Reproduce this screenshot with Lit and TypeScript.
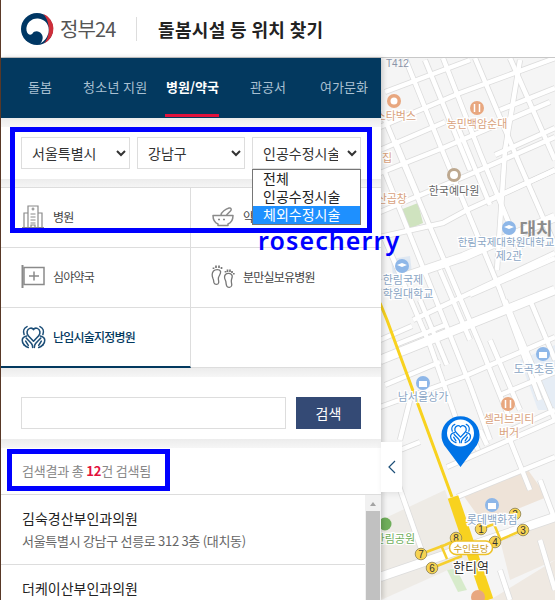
import { LitElement, html, css, svg } from "lit";
import { customElement } from "lit/decorators.js";

const heartHands = (c: string, w = 1.5) => svg`
  <g fill="none" stroke=${c} stroke-width=${w} stroke-linecap="round" stroke-linejoin="round">
    <path d="M12 16.500 7 11.200C5 9 5.500 5.300 8.300 4.200c1.600-.6 3 0 3.700 1.300.7-1.300 2.100-1.900 3.700-1.300 2.800 1.100 3.300 4.800 1.300 7z"/>
    <path d="M5.800 2.500C2.800 3.800 1.800 7 3 10"/><path d="M18.200 2.500C21.200 3.800 22.200 7 21 10"/>
    <path d="M5.500 11.500C3 12 1.300 13.500 1.200 15.500c-.1 2 .8 3.500 1.800 4.500"/><path d="M18.500 11.500C21 12 22.700 13.500 22.800 15.500c.1 2-.8 3.500-1.800 4.500"/>
    <path d="M5 13.500c1.500 1.800 3.500 3.500 5 5.200.8 1 1.200 2.200 1.200 3.800"/><path d="M19 13.500c-1.500 1.800-3.500 3.500-5 5.200-.8 1-1.200 2.200-1.200 3.800"/>
    <path d="M3 20c1 1 2.500 2 4 2.500"/><path d="M21 20c-1 1-2.500 2-4 2.500"/>
    <path d="M4.500 16.500 7 20.500"/><path d="M19.500 16.500 17 20.500"/>
  </g>`;

const roads: string[] = [
  "380,127 460,93 555,58", "380,173 443,148 550,102", "380,212 473,173 555,137",
  "380,237 443,223 467,210 555,170", "413,320 555,253", "380,407 463,377 555,337",
  "447,467 555,420", "457,497 555,457", "380,458 420,442", "395,345 445,325",
  "380,150 445,122", "470,60 385,92", "500,110 555,88", "490,200 555,170", "495,155 555,128",
  "380,340 412,326", "470,295 555,258", "385,385 440,362", "500,395 555,372", "500,435 555,410",
];
const wideRoads: string[] = ["380,285 463,257 555,217", "380,360 480,320 555,290", "380,577 555,517"];
const steep: string[] = [
  "443,58 480,153 520,250", "405,58 440,145 500,290 540,400", "385,120 425,215 480,345 510,420",
  "475,58 520,165 555,245", "510,58 555,160", "384,170 410,235 470,385 490,440",
  "383,235 430,345 460,430", "420,300 447,365", "505,300 555,420", "530,300 555,360",
  "490,340 520,410", "410,400 400,440", "520,60 505,150 497,270", "540,480 555,520",
  "510,440 530,490", "395,475 425,560", "500,570 510,600", "540,540 555,590",
  "425,60 470,170", "455,120 490,205", "395,140 418,195", "440,270 470,340", "480,430 487,445", "470,430 478,450",
];

const mapSvg = svg`
<svg viewBox="0 0 555 600" width="555" height="600">
  <rect width="555" height="600" fill="#f5f5f5"/>
  <polygon points="520,360 555,345 555,410 538,410" fill="#e6edf5"/>
  <polygon points="463,495 528,470 547,497 483,523" fill="#eee3d8"/>
  <polygon points="381,520 445,490 470,560 381,600" fill="#eeebe6"/>
  <polygon points="490,600 555,560 555,600" fill="#efe9e2"/>
  <polygon points="500,540 555,520 555,560 510,580" fill="#efe9e2"/>
  <polygon points="400,210 418,203 423,223 407,230" fill="#cfe3bf"/>
  <polygon points="391,259 410,256 412,273 393,276" fill="#dfe8f2"/>
  <polygon points="447,570 456,568 467,590 458,592" fill="#d7ebcb"/>
  <g fill="none" stroke-linejoin="round">
    ${[...roads, ...steep].map(p => svg`<polyline points=${p} stroke="#dcdcdc" stroke-width="6"/>`)}
    ${wideRoads.map(p => svg`<polyline points=${p} stroke="#dcdcdc" stroke-width="10"/>`)}
    ${[...roads, ...steep].map(p => svg`<polyline points=${p} stroke="#fff" stroke-width="4.500"/>`)}
    ${wideRoads.map(p => svg`<polyline points=${p} stroke="#fff" stroke-width="8.500"/>`)}
    <polyline points="380,303 387,320 452,497" stroke="#f8d21f" stroke-width="3"/>
    <polyline points="453,497 488,600" stroke="#f8d21f" stroke-width="11"/>
    <g stroke="#f6cf2e" stroke-width="2.500">
      <polyline points="421,554 445,545 456,540"/>
      <polyline points="432,568 462,556"/>
      <polyline points="441,545 447,559"/>
      <polyline points="495,542 523,530"/>
      <polyline points="481,529 494,524 501,541"/>
    </g>
  </g>
  ${[[481,529,"1"],[515,514,"2"],[523,530,"3"],[495,542,"4"],[432,568,"6"],[421,554,"7"],[456,538,"8"]].map(([x,y,t]) => svg`
    <circle cx=${x} cy=${y} r="5.800" fill="#f7d352" stroke="#8c8050" stroke-width=".8"/>
    <text x=${x} y=${(y as number)+3.600} text-anchor="middle" font-size="10" fill="#333" font-family="Liberation Sans">${t}</text>`)}
  <rect x="449.500" y="541" width="43" height="13.500" rx="6.700" fill="#fff" stroke="#eec227" stroke-width="1.500"/>
  <g font-family="Noto Sans CJK KR, sans-serif" text-anchor="middle" stroke="#fff" stroke-width="2.500" paint-order="stroke">
    <text x="471" y="551.500" font-size="9.500" fill="#c99a1c" stroke="none">수인분당</text>
    <text x="471" y="572" font-size="13" fill="#333">한티역</text>
    <text x="416" y="120" font-size="11" fill="#d9a27d" style="text-anchor:end">스타벅스</text>
    <text x="477" y="128" font-size="11" fill="#d9a27d">농민백암순대</text>
    <text x="387" y="162" font-size="11" fill="#d9a27d">집</text>
    <text x="407" y="203" font-size="11" fill="#d9a27d" style="text-anchor:end">산곱창</text>
    <text x="454" y="195" font-size="11" fill="#666">한국예다원</text>
    <text x="536" y="236" font-size="18" font-weight="700" fill="#8c8c8c" stroke="none">대치</text>
    <text x="506" y="246" font-size="10.500" fill="#8aa5c4">한림국제대학원대학교</text>
    <text x="509" y="260" font-size="11" fill="#8aa5c4">제2관</text>
    <text x="403" y="284" font-size="11" fill="#8aa5c4">한림국제</text>
    <text x="408" y="298" font-size="11" fill="#8aa5c4">학원대학교</text>
    <text x="423" y="401" font-size="11" fill="#8aa5c4">남서울상가</text>
    <text x="534" y="373" font-size="11" fill="#8aa5c4">도곡초등</text>
    <text x="509" y="423" font-size="11" fill="#d9a27d">셀러브리티</text>
    <text x="509" y="437" font-size="11" fill="#d9a27d">버거</text>
    <text x="492" y="524" font-size="11" fill="#8aa5c4">롯데백화점</text>
    <text x="415" y="543" font-size="11" fill="#6fae5b" style="text-anchor:end">한림공원</text>
  </g>
  <text x="386" y="67" font-size="10" fill="#8a94a8" font-family="Liberation Sans">T412</text>
  <circle cx="394" cy="101" r="7" fill="#e8a77f"/><circle cx="394" cy="101" r="3.500" fill="#fff"/>
  <circle cx="477" cy="108" r="7" fill="#e8a77f"/><path d="M474.500 104v8M479.500 104v8" stroke="#fff" stroke-width="1.500"/>
  <circle cx="454" cy="175" r="7" fill="#bda88f"/><circle cx="454" cy="175" r="4" fill="#fff"/>
  <circle cx="509" cy="228" r="7" fill="#8eb7e8"/><path d="M504 227l5-2 5 2-5 2z" fill="#fff"/>
  <circle cx="402" cy="266" r="7" fill="#8eb7e8"/><path d="M397 265l5-2 5 2-5 2z" fill="#fff"/>
  <circle cx="423" cy="383" r="7" fill="#8eb7e8"/><rect x="419" y="381" width="8" height="6" fill="#fff"/>
  <circle cx="543" cy="354" r="7" fill="#8eb7e8"/><rect x="539" y="352" width="8" height="6" fill="#fff"/>
  <circle cx="508" cy="404" r="7" fill="#e8a77f"/><path d="M505.500 400v8M510.500 400v8" stroke="#fff" stroke-width="1.500"/>
  <circle cx="492" cy="505" r="7" fill="#8eb7e8"/><rect x="488" y="503" width="8" height="6" fill="#fff"/>
  <circle cx="385" cy="524" r="6.500" fill="#6fae5b"/>
  <circle cx="478" cy="597" r="7" fill="#e8a77f"/>
  <path d="M460.500 467 446 447.500a19 19 0 1 1 29 0z" fill="#0073e6"/>
  <circle cx="460.500" cy="433" r="13.500" fill="#fff"/>
  <g transform="translate(449.500 422) scale(.92)">${heartHands("#0073e6", 1.400)}</g>
</svg>`;

const hospital = svg`<svg viewBox="0 0 24 26" width="24" height="26" fill="none" stroke="#8a8a8a" stroke-width="1.200">
  <path d="M7 24V3h10v21"/><path d="M7 10H3v14M17 10h4v14M1 24.500h22"/><path d="M12 4.500v3M10.500 6h3"/>
  <path d="M9.500 11h5M9.500 14h5M9.500 17h5M9.500 20h5M10 24v-2h4v2"/></svg>`;
const mortar = svg`<svg viewBox="0 0 24 22" width="24" height="22" fill="none" stroke="#8a8a8a" stroke-width="1.500">
  <path d="M2 10.500h20c0 4.500-2.500 7.500-5 8.500v1.500H7V19c-2.500-1-5-4-5-8.500z" stroke-linejoin="round"/>
  <path d="M10 10c0-3 5-6 8-7 2-.5 3 1.500 1.500 3L15.500 10"/><path d="M7 14.500h10" stroke-dasharray="2 3"/></svg>`;
const plusFrame = svg`<svg viewBox="0 0 24 24" width="24" height="24" fill="none" stroke="#8a8a8a">
  <path d="M1.500 1v23" stroke-width="2"/><rect x="3" y="3.500" width="20" height="17" stroke-width="1.500"/><path d="M8 12h10M13 7.500v9" stroke-width="1.500"/></svg>`;
const feet = svg`<svg viewBox="0 0 24 26" width="24" height="26" fill="none" stroke="#777" stroke-width="1.300">
  <path d="M2.500 8C.8 10 1 13 2 15.500c.8 1.700.6 3 1 4.300.8 2.200 4 2.200 4.600 0 .5-1.800-.8-3.200 0-5.500 1-2.500 2.700-4.300 1.800-6.200C8.500 6.200 4.500 6 2.500 8z"/>
  <path d="M14.500 11.500c-1.500 1.700-1 4 0 6 .8 1.600.2 3.200 1.200 5.400 1 2.200 4.600 1.700 5-.4.400-2-1-3.500-.2-6 .7-2 1.500-3.700 0-5-1.500-1.300-4.500-1.500-6 0z"/>
  <path d="M2.500 4.500v1.500M5 2.500V5M8 2.500V5M10.500 4v2M14.500 8v1.500M16.500 6.500V9M19 6.500V9M21 8v2M22.800 10v1.500" stroke-width="1.700"/></svg>`;

@customElement("app-root")
export class AppRoot extends LitElement {
  static styles = css`
    :host { display: block; position: relative; width: 555px; height: 600px; overflow: hidden; background: #f5f5f5;
      font-family: "Noto Sans CJK KR", "Noto Sans", sans-serif; color: #222; }
    * { box-sizing: border-box; }
    .map { position: absolute; inset: 0; }
    .map svg { display: block; }
    .page { position: relative; display: flex; flex-direction: column; height: 600px; border-left: 1px solid #5b3a29; }
    header { display: flex; align-items: center; height: 58px; padding-left: 19px; background: #fff; border-bottom: 1px solid #c8c8c8; flex: none; }
    .brand { font-size: 20px; color: #555; margin-left: 6px; letter-spacing: -.9px; line-height: 24px; width: 61px; }
    .vr { width: 1px; height: 24px; background: #ddd; margin: 0 21px 0 15px; }
    h1 { margin: 0; font-size: 18px; font-weight: 700; color: #222; letter-spacing: .35px; }
    .panel { position: relative; width: 380px; flex: 1; min-height: 0; background: #fff; display: flex; flex-direction: column; box-shadow: 2px 0 5px rgba(0,0,0,.18); }
    nav { position: relative; height: 60px; background: #03395f; flex: none; display: flex; font-size: 13px; color: #a9c0d2; }
    nav span { position: absolute; top: 19px; line-height: 20px; white-space: nowrap; }
    nav .on { color: #fff; font-weight: 700; }
    nav .on::after { content: ""; position: absolute; left: -1px; right: 0; top: 37px; height: 3px; background: #e2113c; }
    .band { height: 9px; flex: none; background: linear-gradient(#ececec, #f6f6f6); }
    .selects { display: flex; gap: 7px; padding: 10px 20px 10px; flex: none; position: relative; height: 52px; }
    select { height: 32px; font: 14px "Noto Sans CJK KR", sans-serif; color: #333; background: #fff; border: 1px solid #ddd; padding: 0 6px; border-radius: 0; outline: none; }
    select.a { width: 109px; } select.b { width: 108px; } select.c { width: 109px; }
    .drop { position: absolute; left: 251px; top: 42px; width: 109px; border: 1px solid #767676; background: #fff; font-size: 14px; z-index: 3; color: #222; }
    .drop div { height: 18px; line-height: 17px; padding-left: 10px; }
    .drop .hl { background: #1e90ff; color: #fff; }
    .grid { display: grid; grid-template-columns: 190px 190px; grid-auto-rows: 60px; flex: none; border-top: 1px solid #ddd; margin-top: -1px; background: #fff; }
    .cell { display: flex; align-items: center; gap: 8px; padding: 0 0 3px 20px; border-bottom: 1px solid #ddd; font-size: 12px; color: #444; letter-spacing: -.8px; position: relative; }
    .cell:nth-child(odd) { border-right: 1px solid #ddd; }
    .cell svg { flex: none; }
    .cell .ic { width: 24px; display: flex; justify-content: center; }
    .cell.active { color: #03395f; font-weight: 500; padding-bottom: 2px; border-bottom: 2px solid #03395f; }
    .search { display: flex; gap: 10px; padding: 20px 20px 10px; flex: none; height: 62px; }
    .search input { width: 265px; height: 32px; border: 1px solid #ddd; background: #fff; outline: none; }
    .search button { width: 65px; height: 32px; border: none; background: #344a75; color: #fff; font: 14px "Noto Sans CJK KR", sans-serif; }
    .count { height: 47px; flex: none; padding: 0 0 2px 21px; display: flex; align-items: center; font-size: 13px; color: #888; border-bottom: 1px solid #ddd; background: #fff; letter-spacing: -.2px; white-space: pre; }
    .count b { color: #e2113c; font-weight: 700; }
    .results { flex: 1; min-height: 0; display: flex; overflow: hidden; }
    .items { flex: 1; min-width: 0; }
    .item { padding: 12px 0 11px 21px; height: 70px; border-bottom: 1px solid #ddd; }
    .item .n { font-size: 14px; line-height: 22px; color: #222; letter-spacing: 0; }
    .item .a { font-size: 13px; line-height: 20px; color: #666; margin-top: 2px; letter-spacing: -.3px; }
    .sb { width: 16px; flex: none; background: #f1f1f1; display: flex; flex-direction: column; align-items: center; }
    .sb .up { width: 0; height: 0; margin: 7px 0 5px; border: 3.500px solid transparent; border-top: 0; border-bottom: 4px solid #a3a3a3; }
    .sb .th { width: 14px; flex: 1; background: #c1c1c1; }
    .handle { position: absolute; left: 380px; top: 384px; width: 21px; height: 50px; background: #fff; display: flex; align-items: center; justify-content: center; box-shadow: 1px 2px 6px rgba(0,0,0,.08); }
    .mark { position: absolute; border: 5px solid #0000ff; pointer-events: none; z-index: 4; }
    .mark.one { left: 9px; top: 69px; width: 362px; height: 106px; }
    .mark.two { left: 6px; top: 391px; width: 163px; height: 42px; }
    .sig { position: absolute; left: 257px; top: 166px; z-index: 5; color: #0000ff; font: 600 25px/32px "Noto Sans", sans-serif; letter-spacing: 1.100px; white-space: nowrap; }
  `;

  render() {
    return html`
      <div class="map">${mapSvg}</div>
      <div class="page">
        <header>
          <svg viewBox="0 0 34 34" width="34" height="34">
            <circle cx="17" cy="17" r="16" fill="#003764"/>
            <path d="M23 1.800A16 16 0 0 1 24 31.400C30 26 31 10 23 1.800z" fill="#cd2e3a"/>
            <path d="M6.500 18.500C5.500 11 12 6 18 6.500c7.500.6 12 7 10.500 14-1 5-4.500 9-8.500 11.300 3-3 3.500-7 1.500-9.800-2.500-3.800-7.500-3.300-9-.5-1 1.800-5 2-6 -3z" fill="#fff"/>
          </svg>
          <span class="brand">정부24</span>
          <span class="vr"></span>
          <h1>돌봄시설 등 위치 찾기</h1>
        </header>
        <div class="panel">
          <nav>
            <span style="left:27px">돌봄</span>
            <span style="left:82px;letter-spacing:.3px">청소년 지원</span>
            <span class="on" style="left:165px;">병원/약국</span>
            <span style="left:249px">관공서</span>
            <span style="left:319px">여가문화</span>
          </nav>
          <div class="band"></div>
          <div class="selects">
            <select class="a"><option>서울특별시</option></select>
            <select class="b"><option>강남구</option></select>
            <select class="c"><option>인공수정시술</option></select>
            <div class="drop">
              <div>전체</div><div>인공수정시술</div><div class="hl">체외수정시술</div>
            </div>
          </div>
          <div class="band"></div>
          <div class="grid">
            <div class="cell"><span class="ic">${hospital}</span>병원</div>
            <div class="cell"><span class="ic">${mortar}</span>약국</div>
            <div class="cell"><span class="ic">${plusFrame}</span>심야약국</div>
            <div class="cell"><span class="ic">${feet}</span>분만실보유병원</div>
            <div class="cell active"><span class="ic"><svg viewBox="0 0 24 24" width="25" height="25">${heartHands("#1d4f78")}</svg></span>난임시술지정병원</div>
            <div class="cell"></div>
          </div>
          <div class="band"></div>
          <div class="search"><input type="text" aria-label="검색어" /><button>검색</button></div>
          <div class="band"></div>
          <div class="count">검색결과 총 <b>12</b>건 검색됨</div>
          <div class="results">
            <div class="items">
              <div class="item"><div class="n">김숙경산부인과의원</div><div class="a">서울특별시 강남구 선릉로 312 3층 (대치동)</div></div>
              <div class="item"><div class="n">더케이산부인과의원</div></div>
            </div>
            <div class="sb"><span class="up"></span><span class="th"></span></div>
          </div>
          <div class="handle">
            <svg viewBox="0 0 10 14" width="10" height="14" fill="none" stroke="#1d4f78" stroke-width="1.200"><path d="M8 1 2 7l6 6"/></svg>
          </div>
          <div class="mark one"></div>
          <div class="mark two"></div>
          <div class="sig">rosecherry</div>
        </div>
      </div>
    `;
  }
}
